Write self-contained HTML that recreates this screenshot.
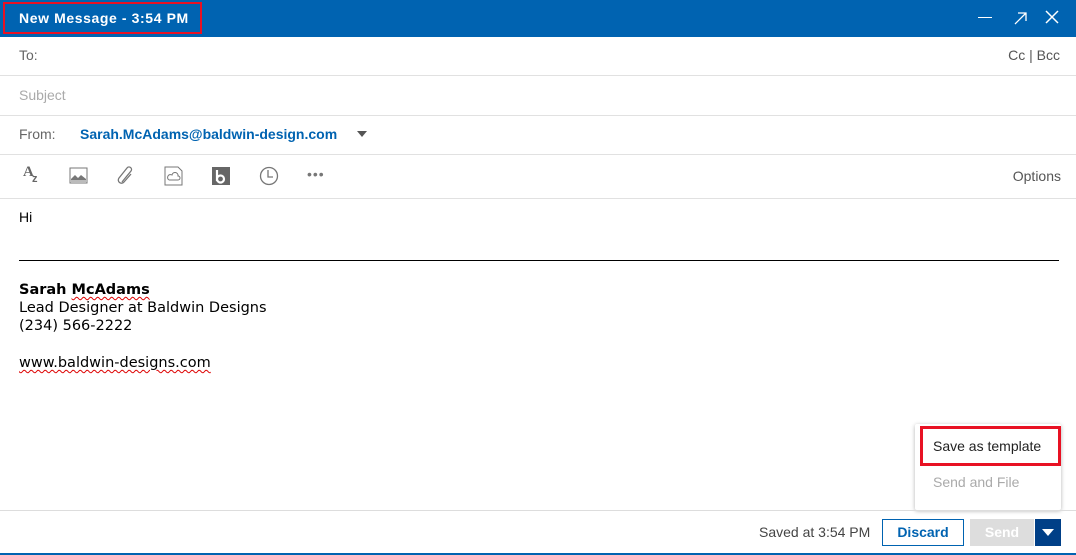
<!DOCTYPE html>
<html><head><meta charset="utf-8"><style>
*{margin:0;padding:0;box-sizing:border-box}
body{width:1076px;height:555px;background:#fff;font-family:"Liberation Sans",Arial,Helvetica,sans-serif;position:relative;overflow:hidden;color:#333}
.hdr{position:absolute;left:0;top:0;width:1076px;height:37px;background:#0063b1}
.title{position:absolute;left:3px;top:2px;width:199px;height:32px;border:2px solid #e81123;color:#fff;font-weight:bold;font-size:14px;line-height:28px;padding-left:14px;letter-spacing:.6px}
.row{position:absolute;left:0;width:1076px;border-bottom:1px solid #e1e1e1;font-size:14px}
.lbl{position:absolute;left:19px;color:#666}
.a{position:absolute}
.sig{position:absolute;left:19px;font-family:"DejaVu Sans",sans-serif;font-size:14.5px;color:#000}
.squig{text-decoration:underline wavy #d00;text-decoration-thickness:1px;text-underline-offset:2px}
</style></head><body>
<div class="hdr">
<div class="title">New Message - 3:54 PM</div>
<div class="a" style="left:978px;top:17px;width:14px;height:1px;background:#fff"></div>
<svg class="a" style="left:1013px;top:10px" width="16" height="16"><path d="M2 14L13 3M5 3h8v8" stroke="#fff" stroke-width="1.3" fill="none"/></svg>
<svg class="a" style="left:1045px;top:10px" width="14" height="14"><path d="M1 1L13 13M13 1L1 13" stroke="#fff" stroke-width="1.5"/></svg>
</div>
<div class="row" style="top:37px;height:39px"><span class="lbl" style="top:10px">To:</span><span class="a" style="right:16px;top:10px;color:#555">Cc | Bcc</span></div>
<div class="row" style="top:76px;height:40px"><span class="lbl" style="top:11px;color:#aaa">Subject</span></div>
<div class="row" style="top:116px;height:39px"><span class="lbl" style="top:10px">From:</span><span class="a" style="left:80px;top:10px;color:#0063b1;font-weight:bold">Sarah.McAdams@baldwin-design.com</span>
<svg class="a" style="left:357px;top:15px" width="10" height="6"><path d="M0 0h10L5 6z" fill="#555"/></svg></div>
<div class="row" style="top:155px;height:44px">
<span class="a" style="left:23px;top:9px;font-family:'Liberation Serif',serif;font-weight:bold;color:#666;font-size:15px">A</span><span class="a" style="left:32px;top:18px;font-weight:bold;color:#666;font-size:11px">z</span>
<svg class="a" style="left:69px;top:12px" width="20" height="18"><rect x="1" y="1" width="17" height="15" fill="none" stroke="#777"/><path d="M2 12l4-4 3 3 3-3 5 4v2H2z" fill="#777"/><rect x="2" y="13" width="15" height="2" fill="#bbb"/></svg>
<svg class="a" style="left:116px;top:11px" width="20" height="20"><path d="M6 16L15 5a2.5 2.5 0 0 0-4-3L3 12a3 3 0 0 0 5 4l7-8" stroke="#777" stroke-width="1.3" fill="none"/></svg>
<svg class="a" style="left:164px;top:11px" width="20" height="20"><path d="M1 1h13l4 4v14H1z" fill="none" stroke="#777"/><path d="M5 14h9a2 2 0 0 0 0-4 3 3 0 0 0-6-1 2.5 2.5 0 0 0-3 5" fill="none" stroke="#777"/></svg>
<svg class="a" style="left:212px;top:12px" width="18" height="18"><rect width="18" height="18" fill="#666"/><path d="M5 3v11M5 12a3.5 3.5 0 1 0 7 0a3.5 3.5 0 1 0-7 0" stroke="#fff" stroke-width="2.2" fill="none"/></svg>
<svg class="a" style="left:259px;top:11px" width="20" height="20"><circle cx="10" cy="10" r="8.5" fill="none" stroke="#777" stroke-width="1.3"/><path d="M9 4v7h5" stroke="#777" stroke-width="1.3" fill="none"/></svg>
<span class="a" style="left:307px;top:11px;color:#777;font-size:14px;letter-spacing:1px">•••</span>
<span class="a" style="right:15px;top:13px;color:#555">Options</span>
</div>
<div class="a" style="left:19px;top:209px;font-size:14px;color:#000">Hi</div>
<div class="a" style="left:19px;top:260px;width:1040px;height:1px;background:#000"></div>
<div class="sig" style="top:282px;font-weight:bold">Sarah <span class="squig">McAdams</span></div>
<div class="sig" style="top:300px">Lead Designer at Baldwin Designs</div>
<div class="sig" style="top:318px">(234) 566-2222</div>
<div class="sig" style="top:355px"><span class="squig">www.baldwin-designs.com</span></div>
<div class="a" style="left:915px;top:424px;width:146px;height:86px;background:#fff;box-shadow:0 1px 4px rgba(0,0,0,.3);border-radius:2px"></div>
<div class="a" style="left:920px;top:426px;width:141px;height:40px;border:3px solid #e81123;font-size:14px;color:#222;line-height:34px;padding-left:10px">Save as template</div>
<div class="a" style="left:933px;top:474px;font-size:14px;color:#aaa">Send and File</div>
<div class="a" style="left:0;top:510px;width:1076px;height:1px;background:#ddd"></div>
<div class="a" style="left:759px;top:524px;font-size:14px;color:#444">Saved at 3:54 PM</div>
<div class="a" style="left:882px;top:519px;width:82px;height:27px;border:1px solid #0063b1;color:#0063b1;font-weight:bold;font-size:14px;text-align:center;line-height:25px">Discard</div>
<div class="a" style="left:970px;top:519px;width:64px;height:27px;background:#ddd;color:#fff;font-weight:bold;font-size:14px;text-align:center;line-height:27px">Send</div>
<div class="a" style="left:1035px;top:519px;width:26px;height:27px;background:#003f87"></div>
<svg class="a" style="left:1042px;top:529px" width="12" height="7"><path d="M0 0h12L6 7z" fill="#fff"/></svg>
<div class="a" style="left:0;top:553px;width:1076px;height:2px;background:#0063b1"></div>
</body></html>
